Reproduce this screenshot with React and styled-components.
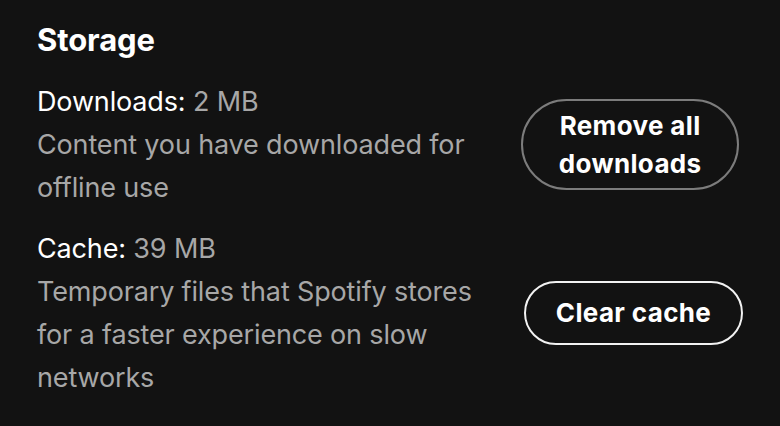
import React from "react";
import styled, { createGlobalStyle } from "styled-components";

const Global = createGlobalStyle`
  html, body { margin: 0; padding: 0; background: #121212; }
  body { font-family: Inter, "Noto Sans", sans-serif; -webkit-font-smoothing: antialiased; }
`;

const Page = styled.div`
  width: 780px;
  height: 426px;
  box-sizing: border-box;
  padding: 21px 37px 0 37px;
  background: #121212;
  color: #fff;
  overflow: hidden;
`;

const Title = styled.h2`
  margin: 0 0 21px;
  font-size: 31px;
  line-height: 38px;
  font-weight: 700;
  letter-spacing: -0.1px;
  color: #fff;
`;

const Section = styled.div`
  display: flex;
  flex-direction: column;
  gap: 18px;
`;

const Row = styled.div`
  display: flex;
  align-items: center;
  justify-content: space-between;
  gap: 40px;
`;

const Info = styled.div`
  width: 445px;
  font-size: 27px;
  line-height: 43px;
  font-weight: 400;
  letter-spacing: -0.15px;
`;

const Label = styled.div`
  color: #fff;
`;

const Value = styled.span`
  color: #a7a7a7;
`;

const Desc = styled.div`
  color: #a7a7a7;
`;

const Button = styled.button`
  box-sizing: border-box;
  width: ${(p) => p.$width}px;
  min-height: 64px;
  margin-right: ${(p) => p.$inset || 0}px;
  padding: 5.5px 26px;
  display: flex;
  align-items: center;
  justify-content: center;
  background: transparent;
  border: 2px solid ${(p) => (p.$muted ? "#7c7c7c" : "#f2f2f2")};
  border-radius: 999px;
  color: #fff;
  font-family: Inter, "Noto Sans", sans-serif;
  font-size: 26px;
  line-height: 38px;
  font-weight: 700;
  letter-spacing: 0.35px;
  text-align: center;
  white-space: ${(p) => (p.$oneLine ? "nowrap" : "normal")};
  cursor: pointer;
`;

const WrapText = styled.span`
  display: block;
  max-width: 150px;
`;

export default function App() {
  return (
    <>
      <Global />
      <Page>
        <Title>Storage</Title>
        <Section>
          <Row>
            <Info>
              <Label>
                Downloads: <Value>2 MB</Value>
              </Label>
              <Desc>Content you have downloaded for offline use</Desc>
            </Info>
            <Button $muted $width={218} $inset={4}>
              <WrapText>Remove all downloads</WrapText>
            </Button>
          </Row>
          <Row>
            <Info>
              <Label>
                Cache: <Value>39 MB</Value>
              </Label>
              <Desc>
                Temporary files that Spotify stores for a faster experience on
                slow networks
              </Desc>
            </Info>
            <Button $width={219} $oneLine>
              Clear cache
            </Button>
          </Row>
        </Section>
      </Page>
    </>
  );
}
